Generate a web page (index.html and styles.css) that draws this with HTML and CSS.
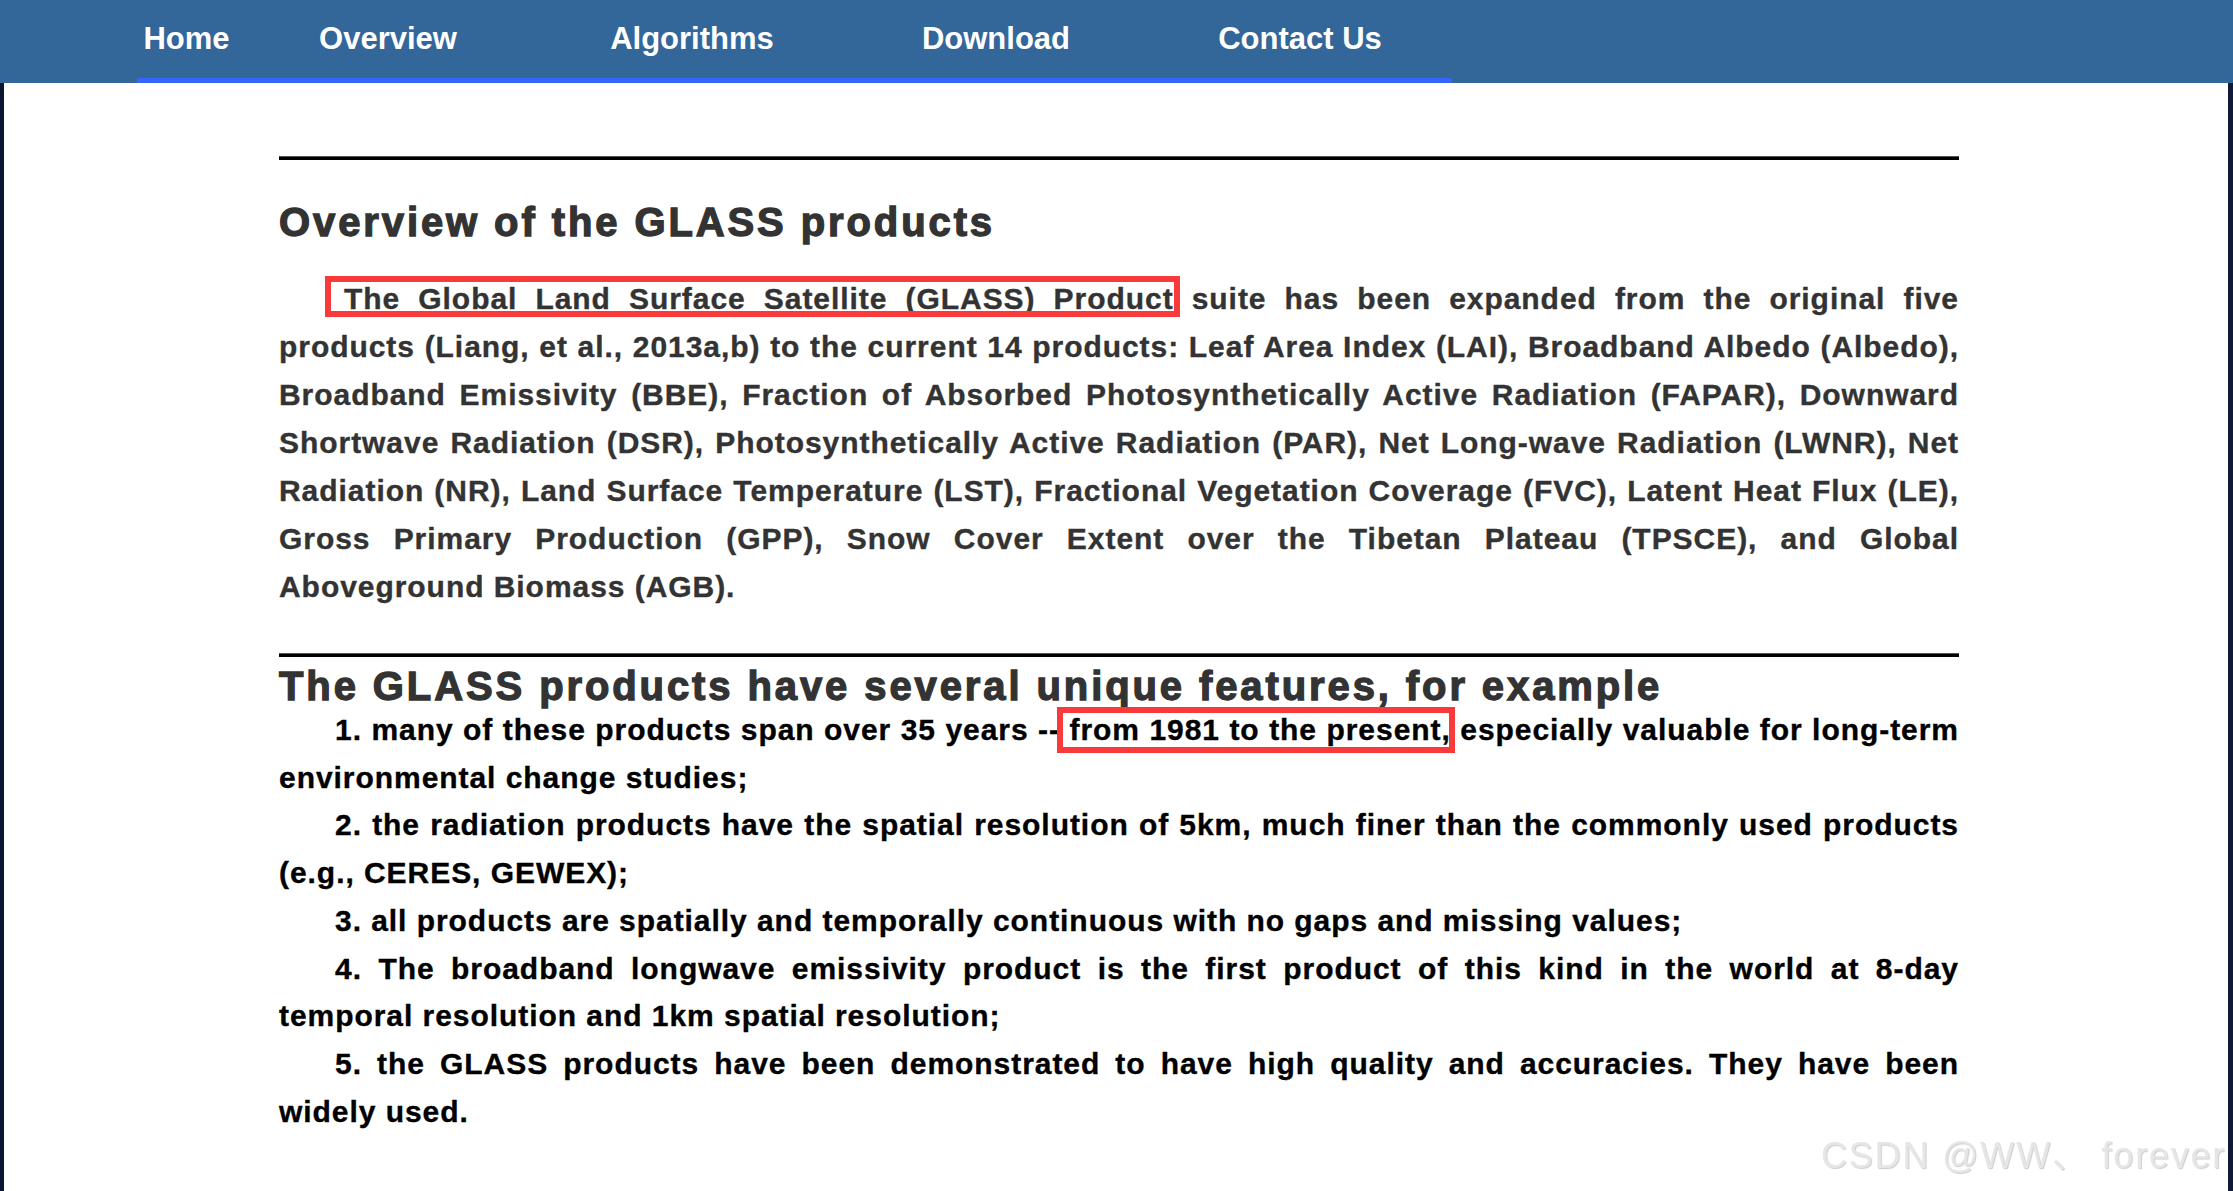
FILE: index.html
```html
<!DOCTYPE html>
<html lang="en">
<head>
<meta charset="utf-8">
<title>GLASS Overview</title>
<link rel="stylesheet" href="styles.css">
</head>
<body>
<nav class="topnav">
  <ul class="menu">
    <li class="menu-item home"><a href="#">Home</a></li>
    <li class="menu-item"><a href="#">Overview</a></li>
    <li class="menu-item"><a href="#">Algorithms</a></li>
    <li class="menu-item"><a href="#">Download</a></li>
    <li class="menu-item"><a href="#">Contact Us</a></li>
  </ul>
</nav>
<div class="page">
  <main class="content">
    <hr class="rule first">
    <h1 class="title">Overview of the GLASS products</h1>
    <p class="intro"><span class="mark mark-a">The Global Land Surface Satellite (GLASS) Product</span> suite has been expanded from the original five products (Liang, et al., 2013a,b) to the current 14 products: Leaf Area Index (LAI), Broadband Albedo (Albedo), Broadband Emissivity (BBE), Fraction of Absorbed Photosynthetically Active Radiation (FAPAR), Downward Shortwave Radiation (DSR), Photosynthetically Active Radiation (PAR), Net Long-wave Radiation (LWNR), Net Radiation (NR), Land Surface Temperature (LST), Fractional Vegetation Coverage (FVC), Latent Heat Flux (LE), Gross Primary Production (GPP), Snow Cover Extent over the Tibetan Plateau (TPSCE), and Global Aboveground Biomass (AGB).</p>
    <hr class="rule second">
    <h2 class="title features">The GLASS products have several unique features, for example</h2>
    <p class="item">1. many of these products span over 35 years -- <span class="mark mark-b">from 1981 to the present,</span> especially valuable for long-term environmental change studies;</p>
    <p class="item">2. the radiation products have the spatial resolution of 5km, much finer than the commonly used products (e.g., CERES, GEWEX);</p>
    <p class="item">3. all products are spatially and temporally continuous with no gaps and missing values;</p>
    <p class="item">4. The broadband longwave emissivity product is the first product of this kind in the world at 8-day temporal resolution and 1km spatial resolution;</p>
    <p class="item">5. the GLASS products have been demonstrated to have high quality and accuracies. They have been widely used.</p>
  </main>
</div>
<div class="watermark">CSDN @WW、 forever</div>
</body>
</html>
```
FILE: styles.css
```css
html, body {
  margin: 0;
  padding: 0;
  height: 100%;
}

body {
  font-family: "Liberation Sans", Arial, "Noto Sans CJK SC", sans-serif;
  background: #ffffff;
  overflow: hidden;
}

.topnav {
  background: #336699;
  height: 83px;
}

.menu {
  list-style: none;
  margin: 0 0 0 137px;
  padding: 0;
  display: inline-flex;
  height: 78px;
  border-bottom: 5px solid #3366ff;
}

.menu-item {
  width: 304px;
}

.menu-item.home {
  width: 99px;
}

.menu-item a {
  display: block;
  text-align: center;
  line-height: 78px;
  font-size: 31px;
  font-weight: bold;
  color: #ffffff;
  text-decoration: none;
  white-space: nowrap;
}

.page {
  display: flow-root;
  height: calc(100% - 83px);
  box-sizing: border-box;
  border-left: 4px solid #0b1532;
  border-right: 5px solid #0e1a36;
  padding-left: 275px;
}

.content {
  width: 1680px;
}

.rule {
  display: block;
  height: 3px;
  background: #000000;
  border: 0;
  border-top: 1px solid #555555;
  margin: 0;
}

.rule.first {
  margin-top: 73px;
}

.rule.second {
  margin-top: 42px;
}

.title {
  margin: 38px 0 0;
  font-size: 40px;
  line-height: 48px;
  letter-spacing: 2.9px;
  font-weight: bold;
  color: #333333;
  -webkit-text-stroke: 1.3px #333333;
}

.title.features {
  margin-top: 9px;
  line-height: 40px;
}

.intro {
  margin: 29px 0 0;
  font-size: 30px;
  line-height: 48px;
  letter-spacing: 0.95px;
  font-weight: bold;
  color: #333333;
  -webkit-text-stroke: 0.35px #333333;
  text-indent: 56px;
  text-align: justify;
}

.item {
  margin: 0;
  font-size: 30px;
  line-height: 47.7px;
  letter-spacing: 0.95px;
  font-weight: bold;
  color: #000000;
  -webkit-text-stroke: 0.35px #000000;
  text-indent: 56px;
  text-align: justify;
}

.mark {
  position: relative;
}

.mark-a {
  padding-left: 9px;
}

.mark::after {
  content: "";
  position: absolute;
  border: 6px solid #f93a3a;
  pointer-events: none;
}

.mark-a::after {
  left: -10px;
  right: -6px;
  top: -6px;
  bottom: -2px;
}

.mark-b::after {
  left: -12px;
  right: -4px;
  top: -6px;
  bottom: -7px;
}

.watermark {
  position: fixed;
  left: 1821px;
  top: 1126px;
  font-family: "Liberation Sans", Arial, "Noto Sans CJK SC", sans-serif;
  font-size: 36px;
  letter-spacing: 1.8px;
  color: #e6e6e6;
  text-shadow: 1px 1px 1px rgba(0, 0, 0, 0.2);
  white-space: nowrap;
}
```
